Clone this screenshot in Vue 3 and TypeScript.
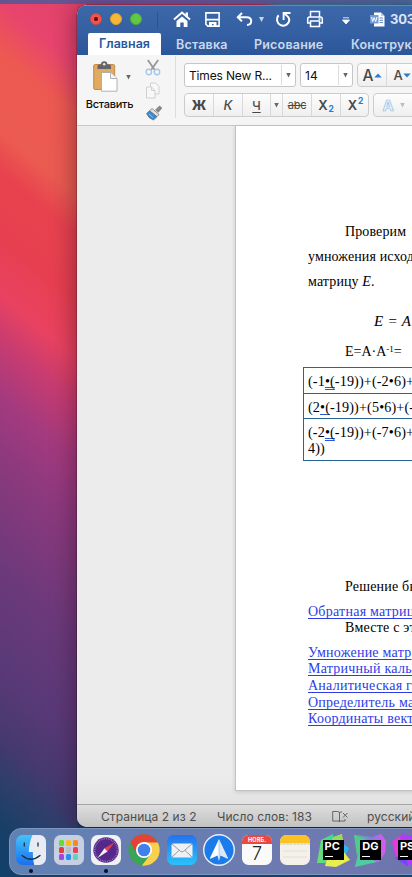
<script setup lang="ts">
interface Para { text: string; cls: string }

const tabs: string[] = ['Вставка', 'Рисование', 'Конструк']

const links: Para[] = [
  { text: 'Умножение матр', cls: 'l1' },
  { text: 'Матричный кальк', cls: 'l2' },
  { text: 'Аналитическая ге', cls: 'l3' },
  { text: 'Определитель ма', cls: 'l4' },
  { text: 'Координаты вект', cls: 'l5' },
]

const pads: string[] = ['#5fdc38', '#fbb91e', '#f58a25', '#e43d3d', '#b9bec4', '#f43b5c', '#a246dc', '#2b8df5', '#5bd6b0']
</script>

<template>
  <div class="desktop">
    <div class="menubar"></div>
    <div class="window">
      <header class="titlebar">
        <div class="lights"><i class="red"></i><i class="yellow"></i><i class="green"></i></div>
        <span class="sep"></span>
        <svg class="home" width="18" height="17" viewBox="0 0 18 17"><path d="M1 8.600 9 1.500l8 7.100" fill="none" stroke="#fff" stroke-width="2" /><path d="M12.500 1.500H15V6l-2.500-2z" fill="#fff" /><path d="M3.500 9.900 9 5.400l5.500 4.500V16h-3.800v-4.600H7.300V16H3.500z" fill="#fff" /></svg>
        <svg class="save" width="15" height="15" viewBox="0 0 15 15"><path d="M.9.9h13.200v13.200H2.800L.9 12.200z" fill="none" stroke="#fff" stroke-width="1.600" /><path d="M1 6.700h13v1.800H1zM4 10h7.500v4.500H8.600V12H7v2.500H4z" fill="#fff" /></svg>
        <svg class="undo" width="17" height="14" viewBox="0 0 17 14"><path d="M6 1 1.800 5.200 6 9.400M2 5.200h8.500c3 0 4.700 1.600 4.700 3.900s-1.700 3.900-4.200 3.900" fill="none" stroke="#fff" stroke-width="2" /></svg>
        <i class="caret light"></i>
        <svg class="redo" width="17" height="17" viewBox="0 0 17 17"><path d="M3.600 4.200A6.200 6.200 0 1 0 14.300 9Q14 5.500 9.600 3" fill="none" stroke="#fff" stroke-width="2" /><path d="M8.600 9V2h6.900" fill="none" stroke="#fff" stroke-width="1.900" /></svg>
        <svg class="print" width="18" height="18" viewBox="0 0 18 18" fill="none" stroke="#fff" stroke-width="1.500"><path d="M4.500 7V1.500h9V7M4.500 13H1.700V9q0-2 2-2h10.600q2 0 2 2v4h-2.800M4.500 11h9v5.500h-9z" /><path d="M12.500 9h2" /></svg>
        <svg class="more" width="8" height="8" viewBox="0 0 8 8"><path d="M1 .8h6M.5 3h7L4 7z" fill="#fff" stroke="#fff" stroke-width=".8" /></svg>
        <svg class="doc" width="15" height="15" viewBox="0 0 15 15"><path d="M4 .5h7l3.500 3.500v10.500H4z" fill="#fff" /><path d="M11 .5V4h3.500" fill="#b8cbe8" /><path d="M0 3h8.500v8.500H0z" fill="#739bd8" /><path d="m1.500 5 1.200 4.500L4.200 5.500 5.700 9.500 7 5" fill="none" stroke="#fff" stroke-width="1" /><path d="M9.500 6h3.500M9.500 8.300h3.500M9.500 10.500h3.500" stroke="#6087c8" /></svg>
        <span class="title">303</span>
      </header>
      <nav class="tabs">
        <span class="tab active">Главная</span>
        <span v-for="(t, i) in tabs" :key="t" class="tab" :class="'t' + i">{{ t }}</span>
      </nav>
      <section class="ribbon">
        <div class="paste">
          <div class="paste-row">
            <svg width="25" height="32" viewBox="0 0 25 32"><rect x=".7" y="3.500" width="21" height="25" rx="1.500" fill="#e0ab61" stroke="#c48b43" stroke-width="1" /><path d="M4.500 8V5q0-1.500 2-1.500h1.500a3.200 3.200 0 0 1 6.400 0H16q2 0 2 1.500v3z" fill="#62656b" /><circle cx="11.200" cy="3.200" r="1.300" fill="#e5e5e5" /><path d="M8.500 11.500h9l6.500 6v12.700H8.500z" fill="#fff" stroke="#aaa" stroke-width=".9" /><path d="M17.500 11.500v6H24" fill="#f4f4f4" stroke="#aaa" stroke-width=".9" /></svg>
            <i class="caret dark"></i>
          </div>
          <span class="paste-label">Вставить</span>
        </div>
        <div class="clip">
          <svg width="16" height="17" viewBox="0 0 16 17"><path d="M2.800 1 9.800 11M13.200 1 6 11" stroke="#999" stroke-width="1.900" /><g fill="none" stroke="#a6c6ea" stroke-width="1.400"><circle cx="3.800" cy="13" r="2.700" /><circle cx="12" cy="13" r="2.700" /></g></svg>
          <svg width="16" height="17" viewBox="0 0 16 17" fill="#f8f8f8" stroke="#d0d0d0"><path d="M5.500 1h5l3.500 3.500V12H5.500z" /><path d="M1.500 5h5L10 8.500V16H1.500zM6.500 5v3.500H10" /></svg>
          <svg width="18" height="16" viewBox="0 0 18 16"><path d="m10.500 5 4-4 2.300 2-3.500 4.300z" fill="#888" stroke="#666" stroke-width=".6" /><path d="m7 3.500 7 6-2 2.200-7.400-6z" fill="#e2e2e2" stroke="#777" stroke-width=".8" /><path d="m4.400 5.800 7.600 6-3.500 3.200Q3.500 13.500 1.500 8.500z" fill="#3b8bd4" stroke="#666" stroke-width=".6" /><path d="m4 9 4 3.500" stroke="#8cc2f2" /></svg>
        </div>
        <div class="font">
          <div class="row">
            <div class="combo name"><span>Times New R...</span><b><i class="caret dark"></i></b></div>
            <div class="combo size"><span>14</span><b><i class="caret dark"></i></b></div>
            <div class="group grow"><span class="btn big">A<svg width="8" height="5" viewBox="0 0 8 5"><path d="M.3 4.500 4 .5l3.700 4z" fill="#2a7bd0" /></svg></span><span class="btn small">A<svg width="8" height="5" viewBox="0 0 8 5"><path d="M.3.5 4 4.500 7.700.5z" fill="#2a7bd0" /></svg></span></div>
          </div>
          <div class="row second">
            <div class="group styles">
              <span class="btn bold">Ж</span><span class="btn italic">К</span><span class="btn under">Ч</span><span class="btn arrow"><i class="caret dark"></i></span><span class="btn strike">abc</span><span class="btn idx">X<sub>2</sub></span><span class="btn idx">X<sup>2</sup></span>
            </div>
            <div class="group effects"><span class="btn glow">A</span><i class="caret pale"></i></div>
          </div>
        </div>
      </section>
      <main class="canvas">
        <article class="page">
          <p class="ind p1">Проверим</p>
          <p class="p2">умножения исход</p>
          <p class="p3">матрицу <em>E</em>.</p>
          <p class="formula">E = A</p>
          <p class="ind prod">E=A·A<sup>-1</sup>=</p>
          <div class="table">
            <div class="cell c1">(-1<u class="dbl">•(</u>-19))+(-2•6)+</div>
            <div class="cell c2">(2<u>•(</u>-19))+(5•6)+(-</div>
            <div class="cell c3">(-2<u class="dbl">•(</u>-19))+(-7•6)+<br>4))</div>
          </div>
          <p class="ind r1">Решение бы</p>
          <p class="link r2">Обратная матриц</p>
          <p class="ind r3">Вместе с эт</p>
          <p v-for="l in links" :key="l.cls" class="link" :class="l.cls">{{ l.text }}</p>
        </article>
      </main>
      <footer class="status">
        <span class="s1">Страница 2 из 2</span>
        <span class="s2">Число слов: 183</span>
        <svg width="17" height="13" viewBox="0 0 17 13" fill="none" stroke="#666"><path d="M10 2H8.500Q7.500 2 7.500 3v9q0-1 1-1H13V9M7.500 3q0-1.500-2-1.500H.7v9.500h5q1.800 0 1.800 1M11 3l4.500 4.500M15.500 3 11 7.500" /></svg>
        <span class="s3">русский</span>
      </footer>
    </div>

    <div class="dock">
      <div class="app running">
        <svg width="30" height="30" viewBox="0 0 30 30"><defs><linearGradient id="fb" x2="0" y2="1"><stop stop-color="#42c3fb" /><stop offset="1" stop-color="#1b70ed" /></linearGradient><clipPath id="fc"><rect width="30" height="30" rx="6.500" /></clipPath></defs><g clip-path="url(#fc)"><path d="M0 0h30v30H0z" fill="url(#fb)" /><path d="M16.500 0Q13 8 12.800 17h4q-.2 7 1.400 13H30V0z" fill="#e7ebf2" /><path d="M8.300 8v3M22 8v3M6 20.500q9 7.500 18 0" fill="none" stroke="#1d3047" stroke-width="1.300" stroke-linecap="round" /></g></svg>
      </div>
      <div class="app pads"><i v-for="(p, i) in pads" :key="i" :style="{ background: p }"></i></div>
      <div class="app running">
        <svg width="30" height="30" viewBox="0 0 30 30"><rect width="30" height="30" rx="6.500" fill="#f1f0f3" /><circle cx="15" cy="15" r="12.700" fill="#55288a" /><circle cx="15" cy="15" r="11.300" fill="none" stroke="#ad91cf" stroke-width="1.600" stroke-dasharray=".6 1.170" /><path d="m23.500 7.500-10 5.700 3 3.300z" fill="#ef3c49" /><path d="m6.500 23 7-9.800 3 3.300z" fill="#f1eef6" /></svg>
      </div>
      <div class="app">
        <svg width="32" height="32" viewBox="0 0 32 32"><defs><clipPath id="cc"><circle cx="16" cy="16" r="15.700" /></clipPath></defs><g clip-path="url(#cc)"><path d="M0 0h32v32H0z" fill="#3ba457" /><path d="M16 8h16v24H13.500l9.400-12z" fill="#fbd04c" /><path d="M1 6 9 20l7-11.500h16V0H0z" fill="#e14337" /></g><circle cx="16" cy="16" r="8" fill="#fff" /><circle cx="16" cy="16" r="6.300" fill="#4080ed" /></svg>
      </div>
      <div class="app">
        <svg width="30" height="30" viewBox="0 0 30 30"><defs><linearGradient id="mg" x2="0" y2="1"><stop stop-color="#2372ed" /><stop offset="1" stop-color="#2bc3fa" /></linearGradient></defs><rect width="30" height="30" rx="6.500" fill="url(#mg)" /><rect x="4.500" y="8.500" width="21" height="14" rx="1.500" fill="#eef0f3" /><path d="m5 9 8.500 7.300q1.500 1.200 3 0L25 9M5 22l7-6.500M25 22l-7-6.500" fill="none" stroke="#8b9299" stroke-width=".9" /></svg>
      </div>
      <div class="app">
        <svg width="32" height="32" viewBox="0 0 32 32"><circle cx="16" cy="16" r="15.300" fill="#1c7bea" stroke="#e9eef5" stroke-width="1.400" /><path d="M16 5 7 24q0 1 1 .5l6.500-3L16 27z" fill="#fff" /><path d="m16 5 9 19q0 1-1 .5l-6.500-3L16 27z" fill="#dce8f8" /><path d="M16 7v19" stroke="#8ab4ea" stroke-width=".6" /></svg>
      </div>
      <div class="app cal"><span>НОЯБ.</span><b>7</b></div>
      <div class="app">
        <svg width="30" height="30" viewBox="0 0 30 30"><defs><clipPath id="nc"><rect width="30" height="30" rx="6.500" /></clipPath></defs><g clip-path="url(#nc)"><path d="M0 0h30v30H0z" fill="#f4f1eb" /><path d="M0 0h30v8H0z" fill="#fac225" /><path d="M0 9h30" stroke="#b8aa85" stroke-dasharray=".7 .7" /><path d="M3 16h24M3 22h24" stroke="#ddd9d1" stroke-width=".8" /></g></svg>
      </div>
      <div class="app jb">
        <svg width="34" height="34" viewBox="0 0 34 34"><defs><linearGradient id="pc" x2="1"><stop stop-color="#6fdc75" /><stop offset="1" stop-color="#38d5a0" /></linearGradient></defs><path d="m23 8 10 7-4 8-8-3z" fill="#27b7f1" /><path d="m1 30 4-23L17 1l2 20-6 9z" fill="url(#pc)" /><path d="m17 5 9-4 1 9 1 9 6 8-14 7-11-1z" fill="#e7ee4e" /><path d="M17 4 26 1v10H15z" fill="#92df55" /></svg><span>PC<i></i></span>
      </div>
      <div class="app jb">
        <svg width="34" height="34" viewBox="0 0 34 34"><defs><linearGradient id="dg"><stop stop-color="#41ce96" /><stop offset=".55" stop-color="#8a78e8" /><stop offset="1" stop-color="#df58e6" /></linearGradient></defs><path d="m1 2 18 2 9-3 5 7-1 12-6 9-12-1L2 34l3-13z" fill="url(#dg)" /><path d="m1 2 11 4-8 17z" fill="#4dcc8e" /><path d="m2 34 4-14 18 9z" fill="#50caa0" /></svg><span>DG<i></i></span>
      </div>
      <div class="app jb">
        <svg width="34" height="34" viewBox="0 0 34 34"><path d="m1 8 11-7 21 4v22l-18 6-11-9z" fill="#b03df4" /><path d="m1 8 4 17 8-2-4-20z" fill="#dc40d8" /><path d="m4 25 10-6 3 14z" fill="#7048f5" /></svg><span>PS<i></i></span>
      </div>
    </div>
  </div>
</template>

<style>
body { margin: 0; overflow: hidden; }
</style>

<style scoped>
* { box-sizing: border-box; }
svg { display: block; flex: none; }
.desktop {
  width: 412px; height: 877px; overflow: hidden; display: flex; flex-direction: column; position: relative;
  font-family: Inter, "Liberation Sans", sans-serif; white-space: nowrap;
  background:
    linear-gradient(220deg, #e0426a 0, #e8446e 50px, #ed5951 90px, #eb5b51 150px, #e8424e 180px, #e73f50 230px, #e94261 275px, #c93c70 308px, #a63a7e 350px, #8f397e 395px, #6c397a 486px, #593978 563px, #46396f 614px, #2a3f6b 652px, #183f68 682px, #12406a 721px) 0 0 / 77px 877px no-repeat,
    linear-gradient(90deg, #d83e68 0 260px, #46a1c4 280px, #3f91b8) 0 0 / 412px 30px no-repeat,
    #173f70;
}
.menubar { height: 4px; margin-bottom: 1px; flex: none; background: linear-gradient(90deg, #64558f, #6d579e 40%, #4f6ba1); }
.window {
  width: 345px; height: 822px; flex: none; margin-left: 77px; display: flex; flex-direction: column;
  border-radius: 10px 0 0 10px; overflow: hidden; background: #ececec;
  box-shadow: 0 4px 25px 2px rgba(25, 0, 20, .4), 0 0 0 .5px rgba(0, 0, 0, .4);
}
.titlebar { height: 28px; flex: none; display: flex; align-items: center; background: linear-gradient(#3c68a9, #3460a3); border-top: 1px solid #6387b9; }
.lights { display: flex; gap: 8px; margin: -2px 0 0 13px; }
.lights i { width: 12px; height: 12px; border-radius: 50%; border: 1px solid; }
.red { background: radial-gradient(circle, #6e0f0c 0 1.700px, #f3544e 2.500px); border-color: #d94640 !important; }
.yellow { background: #f7b836; border-color: #dfa02a !important; }
.green { background: #62c744; border-color: #4caf35 !important; }
.sep { width: 1px; height: 16px; margin-left: 15px; background: #2c528d; }
.home { margin-left: 15px; }
.save { margin-left: 14px; }
.titlebar > svg { margin-top: -1px; }
.undo { margin-left: 16px; }
.titlebar .caret { margin-left: 6px; }
.redo { margin-left: 11px; }
.print { margin-left: 14px; }
.titlebar > .more { margin-left: 18px; margin-top: 2px; }
.doc { margin-left: 20px; }
.title { margin-left: 5px; font-size: 13px; font-weight: 700; color: #dde6f3; letter-spacing: -.2px; margin-top: -1px; }
.caret { width: 5px; height: 5px; clip-path: polygon(0 0, 100% 0, 50% 100%); flex: none; }
.light { background: #c7d5eb; }
.dark { background: #666; }
.pale { background: #bbb; }
.tabs { height: 22px; flex: none; display: flex; align-items: center; background: linear-gradient(#3460a3, #2b579a); font-size: 12.500px; font-weight: 600; color: #ccd8ea; }
.tab { line-height: 21px; letter-spacing: .2px; flex: none; }
.active { width: 73px; height: 22px; margin-left: 11px; text-align: center; background: #fff; color: #2b579a; border-radius: 2px 2px 0 0; letter-spacing: 0; }
.t0 { margin-left: 15px; width: 78px; }
.t1 { width: 97px; }
.ribbon { height: 71px; flex: none; display: flex; background: #f5f5f5; border-bottom: 1px solid #c8c8c8; }
.paste { width: 65px; padding-top: 6px; flex: none; }
.paste-row { display: flex; align-items: center; padding-left: 16px; }
.paste-row .caret { margin-left: 8px; }
.paste-label { display: block; text-align: center; font-size: 11px; font-weight: 500; color: #111; line-height: 14px; margin-top: 4px; letter-spacing: -.25px; }
.clip { width: 34px; flex: none; padding: 3px 0 0 3px; display: flex; flex-direction: column; gap: 6px; border-right: 1px solid #ddd; height: 62px; margin-top: 1px; }
.font { padding: 8px 0 0 8px; flex: none; }
.row { display: flex; }
.second { margin-top: 6px; }
.combo { height: 24px; display: flex; align-items: center; justify-content: space-between; background: #fff; border: 1px solid #c6c6c6; border-radius: 3px; font-size: 12px; color: #111; padding-left: 4px; }
.combo b { width: 14px; height: 20px; display: flex; align-items: center; justify-content: center; border-left: 1px solid #ddd; }
.name { width: 112px; letter-spacing: -.15px; }
.size { width: 53px; margin-left: 4px; }
.group { height: 24px; display: flex; border: 1px solid #ccc; border-radius: 4px; background: linear-gradient(#fdfdfd, #efefef); overflow: hidden; }
.grow { width: 80px; margin-left: 4px; }
.btn { display: flex; align-items: center; justify-content: center; border-right: 1px solid #d9d9d9; color: #484848; flex: none; }
.big { width: 29px; font-size: 15.500px; font-weight: 500; }
.small { width: 31px; font-size: 13px; font-weight: 500; }
.styles { width: 185px; }
.bold { width: 29px; font-size: 13px; font-weight: 800; }
.italic { width: 29px; font-size: 13px; font-style: italic; font-weight: 500; }
.under { width: 28px; font-size: 12px; font-weight: 500; text-decoration: underline; text-underline-offset: 2px; }
.arrow { width: 12px; }
.strike { width: 29px; font-size: 11px; text-decoration: line-through; letter-spacing: -.2px; }
.idx { width: 29px; font-size: 13px; font-weight: 600; }
.idx sub, .idx sup { font-size: 8.500px; color: #2a7bd0; font-weight: 700; margin-left: 1px; }
.idx sub { margin-top: 8px; }
.idx sup { margin-top: -8px; }
.styles .btn:last-child { border-right: 0; }
.effects { width: 60px; margin-left: 4px; align-items: center; }
.glow { width: 25px; border: 0; font-size: 15px; font-weight: 700; color: #e9f3fc; -webkit-text-stroke: .7px #8fbbe0; padding-left: 3px; }
.effects .caret { margin-left: 1px; }
.canvas { height: 678px; flex: none; padding-left: 158px; background: linear-gradient(#ececec 650px, #e2e2e2); }
.page { height: 665px; background: #fff; border: 1px solid #c3c3c3; border-top: 0; padding: 98px 0 0 72px; overflow: hidden; font-family: "Liberation Serif", serif; font-size: 14px; color: #000; box-shadow: 0 1px 4px rgba(0, 0, 0, .15); }
.page p { margin: 9px 0 0; line-height: 16px; height: 16px; letter-spacing: .12px; }
.page .p1 { margin-top: 0; }
.ind { padding-left: 37px; }
.page .formula { margin-top: 23px; padding-left: 66px; font-style: italic; font-size: 15px; word-spacing: .4px; }
.page .prod { margin-top: 15px; letter-spacing: 0; }
.prod sup { font-size: 9px; line-height: 0; vertical-align: 4px; }
.table { margin: 7px 0 0 -5px; border: 1px solid #2a6496; width: 200px; font-size: 14.200px; letter-spacing: .12px; }
.cell { padding: 5px 0 0 4px; height: 25px; line-height: 17px; }
.cell + .cell { border-top: 1px solid #2a6496; }
.cell.c3 { height: 42px; line-height: 16px; }
.cell u { text-decoration: underline #2957d8 1px; text-underline-offset: 2px; text-decoration-skip-ink: none; }
.cell .dbl { text-decoration-style: double; text-underline-offset: 1px; }
.page .r1 { margin-top: 118px; }
.page .link { color: #2e3ce6; text-decoration: underline #2e3ce6 1px; text-underline-offset: 2px; text-decoration-skip-ink: none; letter-spacing: .25px; }
.page .r1, .page .r3 { letter-spacing: .2px; }
.page .r3, .page .l2, .page .l5 { margin-top: 0; }
.page .l3, .page .l4 { margin-top: 1px; }
.status { height: 23px; flex: none; display: flex; align-items: center; border-top: 1px solid #a6a6a6; background: linear-gradient(#dedede, #c2c2c2); color: #4d4d4d; font-size: 12px; padding-left: 24px; letter-spacing: .06px; }
.s1 { width: 116px; }
.s2 { width: 115px; }
.s3 { margin-left: 18px; }
.dock { width: 440px; height: 47px; flex: none; margin: 1px 0 0 9px; border-radius: 12px 0 0 12px; border: 1px solid #7e97bf; background: linear-gradient(90deg, #6181b3, #7079af 75%, #6b73a9); display: flex; padding: 6px 0 0 6px; }
.app { width: 30px; height: 30px; margin-right: 7.700px; flex: none; display: flex; align-items: center; justify-content: center; position: relative; }
.running::after { content: ""; position: absolute; left: 13px; top: 34px; width: 4px; height: 4px; border-radius: 50%; background: #070e32; }
.pads { display: grid; grid-template-columns: repeat(3, 5.500px); grid-auto-rows: 5.500px; gap: 1.500px; align-content: center; align-items: stretch; border-radius: 6.500px; background: #c7d0e2; }
.pads i { border-radius: 1.500px; }
.cal { flex-direction: column; justify-content: flex-start; border-radius: 6.500px; overflow: hidden; background: #fafafa; }
.cal span { width: 100%; height: 9px; background: #ea493f; color: #fff; text-align: center; font-size: 5.500px; line-height: 10px; font-weight: 700; letter-spacing: .2px; }
.cal b { font-size: 18px; line-height: 20px; font-weight: 300; color: #222; }
.jb span { position: absolute; left: 5px; top: 5px; width: 21px; height: 20px; background: #000; color: #fff; font-size: 11px; font-weight: 700; line-height: 13px; padding-left: 2px; }
.jb span i { position: absolute; left: 2px; bottom: 3px; width: 8px; height: 1px; background: #fff; }
</style>
